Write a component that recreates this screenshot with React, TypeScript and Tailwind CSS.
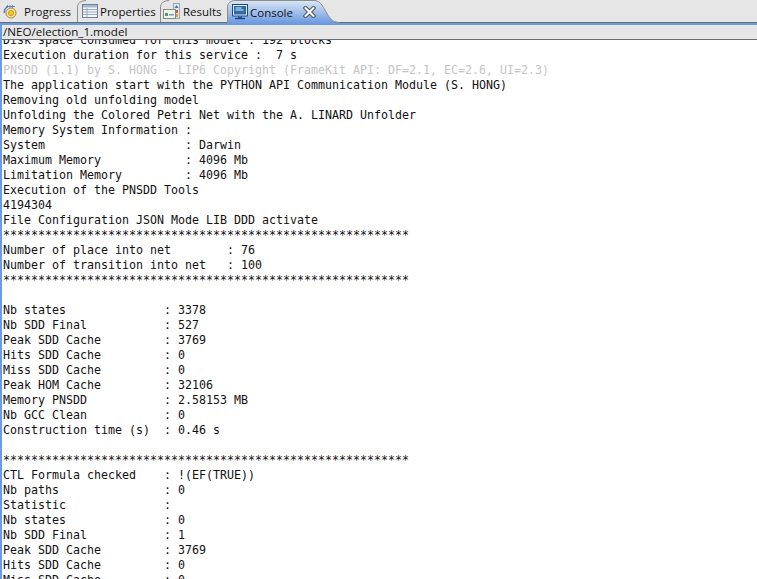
import React, { FC, ReactNode } from 'react';

const lines = [
  'Disk space consumed for this model : 192 blocks',
  'Execution duration for this service :  7 s',
  'PNSDD (1.1) by S. HONG - LIP6 Copyright (FrameKit API: DF=2.1, EC=2.6, UI=2.3)',
  'The application start with the PYTHON API Communication Module (S. HONG)',
  'Removing old unfolding model',
  'Unfolding the Colored Petri Net with the A. LINARD Unfolder',
  'Memory System Information :',
  'System                    : Darwin',
  'Maximum Memory            : 4096 Mb',
  'Limitation Memory         : 4096 Mb',
  'Execution of the PNSDD Tools',
  '4194304',
  'File Configuration JSON Mode LIB DDD activate',
  '**********************************************************',
  'Number of place into net        : 76',
  'Number of transition into net   : 100',
  '**********************************************************',
  '',
  'Nb states              : 3378',
  'Nb SDD Final           : 527',
  'Peak SDD Cache         : 3769',
  'Hits SDD Cache         : 0',
  'Miss SDD Cache         : 0',
  'Peak HOM Cache         : 32106',
  'Memory PNSDD           : 2.58153 MB',
  'Nb GCC Clean           : 0',
  'Construction time (s)  : 0.46 s',
  '',
  '**********************************************************',
  'CTL Formula checked    : !(EF(TRUE))',
  'Nb paths               : 0',
  'Statistic              :',
  'Nb states              : 0',
  'Nb SDD Final           : 1',
  'Peak SDD Cache         : 3769',
  'Hits SDD Cache         : 0',
  'Miss SDD Cache         : 0',
];

const ProgressIcon = () => (
  <svg width="16" height="16" viewBox="0 0 16 16" className="shrink-0 mt-[1px]">
    <path d="M1.5 9 A6 6 0 0 1 4 3" fill="none" stroke="#4a7fb5" strokeWidth="1.5" />
    <path d="M3 2.5 h9 M4.5 1 v3 M7 1 v3 M9.5 1 v3" stroke="#5b8fc4" strokeWidth="1" fill="none" />
    <circle cx="8" cy="9" r="5" fill="#f6e7a8" stroke="#b08a28" strokeWidth="1" />
    <circle cx="8" cy="9" r="2.6" fill="#f0c63c" stroke="#d49a1c" strokeWidth="1" />
  </svg>
);

const PropertiesIcon = () => (
  <svg width="16" height="14" viewBox="0 0 16 14" className="shrink-0">
    <rect x="0.5" y="0.5" width="15" height="13" fill="#f4f6fa" stroke="#6f7f99" />
    <rect x="1" y="1" width="14" height="2.5" fill="#a9b8d0" />
    <path d="M1 5.5 h14 M1 8 h14 M1 10.5 h14 M5 4 v9" stroke="#9aaac4" strokeWidth="1" />
  </svg>
);

const ResultsIcon = () => (
  <svg width="17" height="17" viewBox="0 0 17 17" className="shrink-0 mt-[1px]">
    <rect x="10.5" y="0.5" width="6" height="15" fill="#e8e6d8" stroke="#9aa7b8" />
    <path d="M13.5 2 l2 3 h-4 z" fill="#3f74c8" />
    <rect x="12" y="7" width="3" height="3" fill="#d8504a" />
    <rect x="12" y="11" width="3" height="3" fill="#d8a040" />
    <rect x="0.5" y="6.5" width="12" height="9" fill="#f2f5ea" stroke="#7d8f80" />
    <rect x="2" y="10" width="3" height="3" fill="#4aa552" />
    <rect x="6" y="11" width="5" height="1.5" fill="#7f9ac0" />
  </svg>
);

const ConsoleIcon = () => (
  <svg width="16" height="16" viewBox="0 0 16 16" className="shrink-0">
    <rect x="0.5" y="0.5" width="15" height="11.5" fill="#dfe9f6" stroke="#1d4a80" />
    <rect x="2" y="2" width="12" height="8.5" fill="#2f6aa8" />
    <path d="M3.5 4 h6 M3.5 6 h8" stroke="#e6eef8" strokeWidth="1" />
    <path d="M6 12.5 h4 v1.5 h-4 z" fill="#2f5f96" />
    <path d="M3 14.5 h10" stroke="#1d4a80" strokeWidth="1.5" />
  </svg>
);

const CloseIcon = () => (
  <svg width="13" height="12" viewBox="0 0 13 12" className="shrink-0">
    <path d="M2.5 2 L10.5 10 M10.5 2 L2.5 10" stroke="#4a4f58" strokeWidth="4" strokeLinecap="square" />
    <path d="M2.5 2 L10.5 10 M10.5 2 L2.5 10" stroke="#ffffff" strokeWidth="2" strokeLinecap="square" />
  </svg>
);

// little curved edge on the left of an inactive tab
const TabEdge: FC<{ className: string }> = ({ className }) => (
  <svg width="9" height="22" viewBox="0 0 9 22" className={`shrink-0 ${className}`}>
    <path d="M0.5 22 V8 C0.5 3 3 1 9 0.5" fill="none" stroke="#8d8d8d" strokeWidth="1" />
  </svg>
);

const tabFont = "font-['Open_Sans','DejaVu_Sans',sans-serif] text-[11.5px] text-[#111] mt-[2px]";

interface TabProps {
  icon: ReactNode;
  label: string;
  className: string;
}

const Tab: FC<TabProps> = ({ icon, label, className }) => (
  <div className={`flex items-center h-full shrink-0 ${className}`}>
    {icon}
    <span className={tabFont}>{label}</span>
  </div>
);

const App: FC = () => {
  return (
    <div className="h-[579px] w-[757px] overflow-hidden bg-white flex flex-col">
      <div className="h-[23px] shrink-0 flex bg-[#e6e6e6] border-b border-[#6b6b6b]">
        <Tab icon={<ProgressIcon />} label="Progress" className="w-[77px] pl-[3px] gap-[5px]" />
        <TabEdge className="-mr-[4px]" />
        <Tab icon={<PropertiesIcon />} label="Properties" className="w-[78px] gap-[2px]" />
        <TabEdge className="-mr-[6px]" />
        <Tab icon={<ResultsIcon />} label="Results" className="w-[64px] gap-[3px]" />
        <div className="relative flex items-center h-[23px] w-[114px] pl-[5px] shrink-0">
          <svg width="114" height="23" viewBox="0 0 114 23" className="absolute inset-0">
            <defs>
              <linearGradient id="activeTab" x1="0" y1="0" x2="0" y2="1">
                <stop offset="0" stopColor="#dbe6f5" />
                <stop offset="1" stopColor="#6d9be0" />
              </linearGradient>
            </defs>
            <path d="M0 23 V8 C0 3 3 0.5 9 0.5 H88 C98 0.5 99 22 111 22.5 L114 23 Z" fill="url(#activeTab)" />
            <path d="M0.5 23 V8 C0.5 3 3 0.5 9 0.5 H88 C98 0.5 99 22 111 22.5" fill="none" stroke="#8d8d8d" />
          </svg>
          <div className="relative flex items-center gap-[2px]">
            <ConsoleIcon />
            <span className={tabFont}>Console</span>
            <span className="ml-[8px] flex"><CloseIcon /></span>
          </div>
        </div>
        <div className="flex-1" />
      </div>
      <div className="flex-1 min-h-0 flex flex-col border-l-[2px] border-[#6d9be0]">
        <div className="h-[2px] shrink-0 -ml-[2px] bg-[#6d9be0]" />
        <div className="h-[15px] shrink-0 bg-[#e6e6e6] border-b border-[#6b6b6b] flex items-center pl-[1px]">
          <span className="font-['Open_Sans','DejaVu_Sans',sans-serif] text-[11.6px] text-[#111] leading-none">/NEO/election_1.model</span>
        </div>
        <div className="flex-1 min-h-0 overflow-hidden pl-[1px]">
          <div className="-mt-[7px] font-['DejaVu_Sans_Mono',monospace] text-[11.63px] leading-[15px] text-[#111] whitespace-pre">
            {lines.map((line, i) => (
              <div key={i} className={`h-[15px] ${i === 2 ? 'text-[#c4c4c4]' : ''}`}>{line}</div>
            ))}
          </div>
        </div>
      </div>
    </div>
  );
};

export default App;
